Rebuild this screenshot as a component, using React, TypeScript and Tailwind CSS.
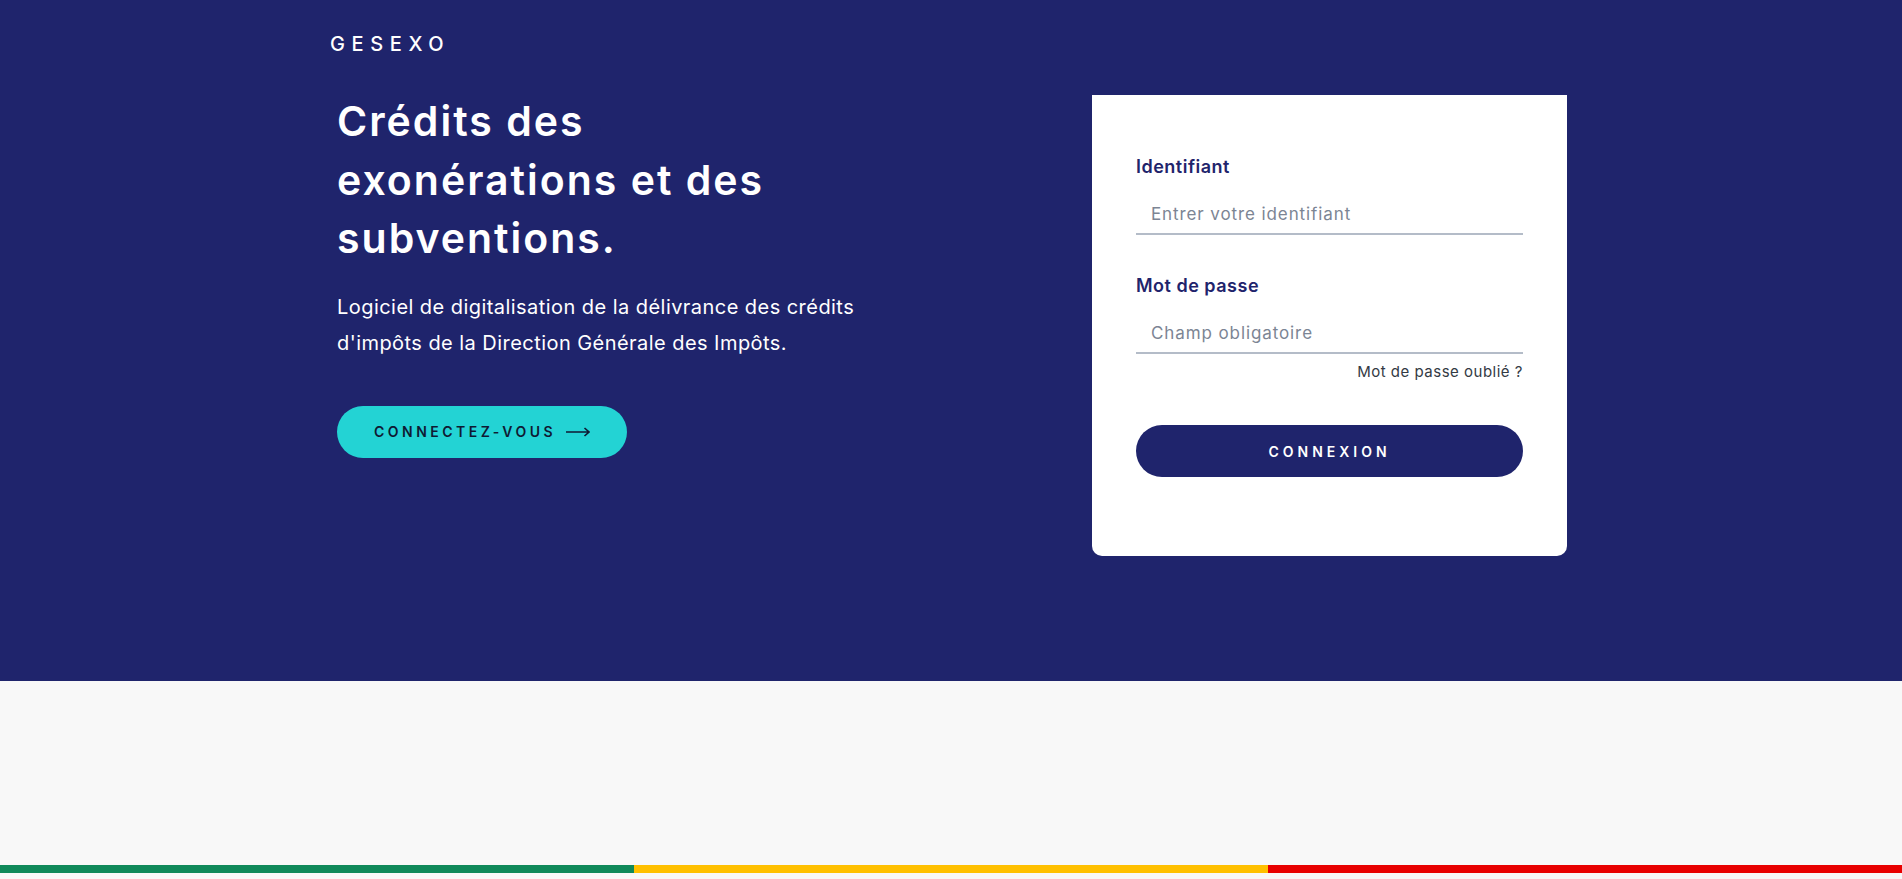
export default function App() {
  return (
    <div
      className="min-h-screen bg-[#f8f8f8] flex flex-col"
      style={{ fontFamily: "Inter, 'Open Sans', sans-serif" }}
    >
      <section className="bg-[#1f246c] h-[681px] shrink-0">
        <div className="w-[1242px] mx-auto pt-[32px]">
          <div className="text-white text-[20px] leading-[24px] font-medium tracking-[6.6px]">GESEXO</div>
          <div className="flex justify-between items-start mt-[36px]">
            <div className="ml-[7px]">
              <h1 className="text-white text-[41px] leading-[58.5px] font-semibold tracking-[2px]">
                Crédits des
                <br />
                exonérations et des
                <br />
                subventions.
              </h1>
              <p className="mt-[21px] text-white text-[20px] leading-[36px] tracking-[0.45px]">
                Logiciel de digitalisation de la délivrance des crédits
                <br />
                d'impôts de la Direction Générale des Impôts.
              </p>
              <button className="mt-[45px] h-[52px] w-[290px] rounded-full bg-[#23d3d4] flex items-center justify-center gap-[10px] text-[#0f1a33] text-[14px] font-semibold tracking-[3.5px]">
                <span>CONNECTEZ-VOUS</span>
                <svg width="24" height="10" viewBox="0 0 24 10" fill="none">
                  <path d="M0 5H23M18.5 1L23 5L18.5 9" stroke="#0f1a33" strokeWidth="1.6" />
                </svg>
              </button>
            </div>
            <div className="mt-[3px] mr-[5px] w-[475px] bg-white rounded-b-[10px] px-[44px] pt-[60px] pb-[79px]">
              <label className="block text-[#1f246c] text-[18px] leading-[24px] font-semibold tracking-[0.5px]">Identifiant</label>
              <input
                className="mt-[16px] block w-full h-[40px] border-b-2 border-[#b4bcc8] px-[15px] text-[17px] tracking-[0.9px] outline-none placeholder:text-[#7c8594]"
                placeholder="Entrer votre identifiant"
              />
              <label className="mt-[39px] block text-[#1f246c] text-[18px] leading-[24px] font-semibold tracking-[0.5px]">Mot de passe</label>
              <input
                type="password"
                className="mt-[16px] block w-full h-[40px] border-b-2 border-[#b4bcc8] px-[15px] text-[17px] tracking-[0.9px] outline-none placeholder:text-[#7c8594]"
                placeholder="Champ obligatoire"
              />
              <div className="mt-[8px] text-right text-[15px] leading-[20px] tracking-[0.5px] text-[#333a44]">Mot de passe oublié ?</div>
              <button className="mt-[43px] w-full h-[52px] rounded-full bg-[#1f246c] text-white text-[14px] font-semibold tracking-[4px]">
                CONNEXION
              </button>
            </div>
          </div>
        </div>
      </section>
      <div className="flex-1" />
      <div className="flex h-[8px] shrink-0">
        <div className="flex-1 bg-[#10895a]" />
        <div className="flex-1 bg-[#ffc000]" />
        <div className="flex-1 bg-[#e80000]" />
      </div>
      <div className="h-[6px] shrink-0" />
    </div>
  );
}
